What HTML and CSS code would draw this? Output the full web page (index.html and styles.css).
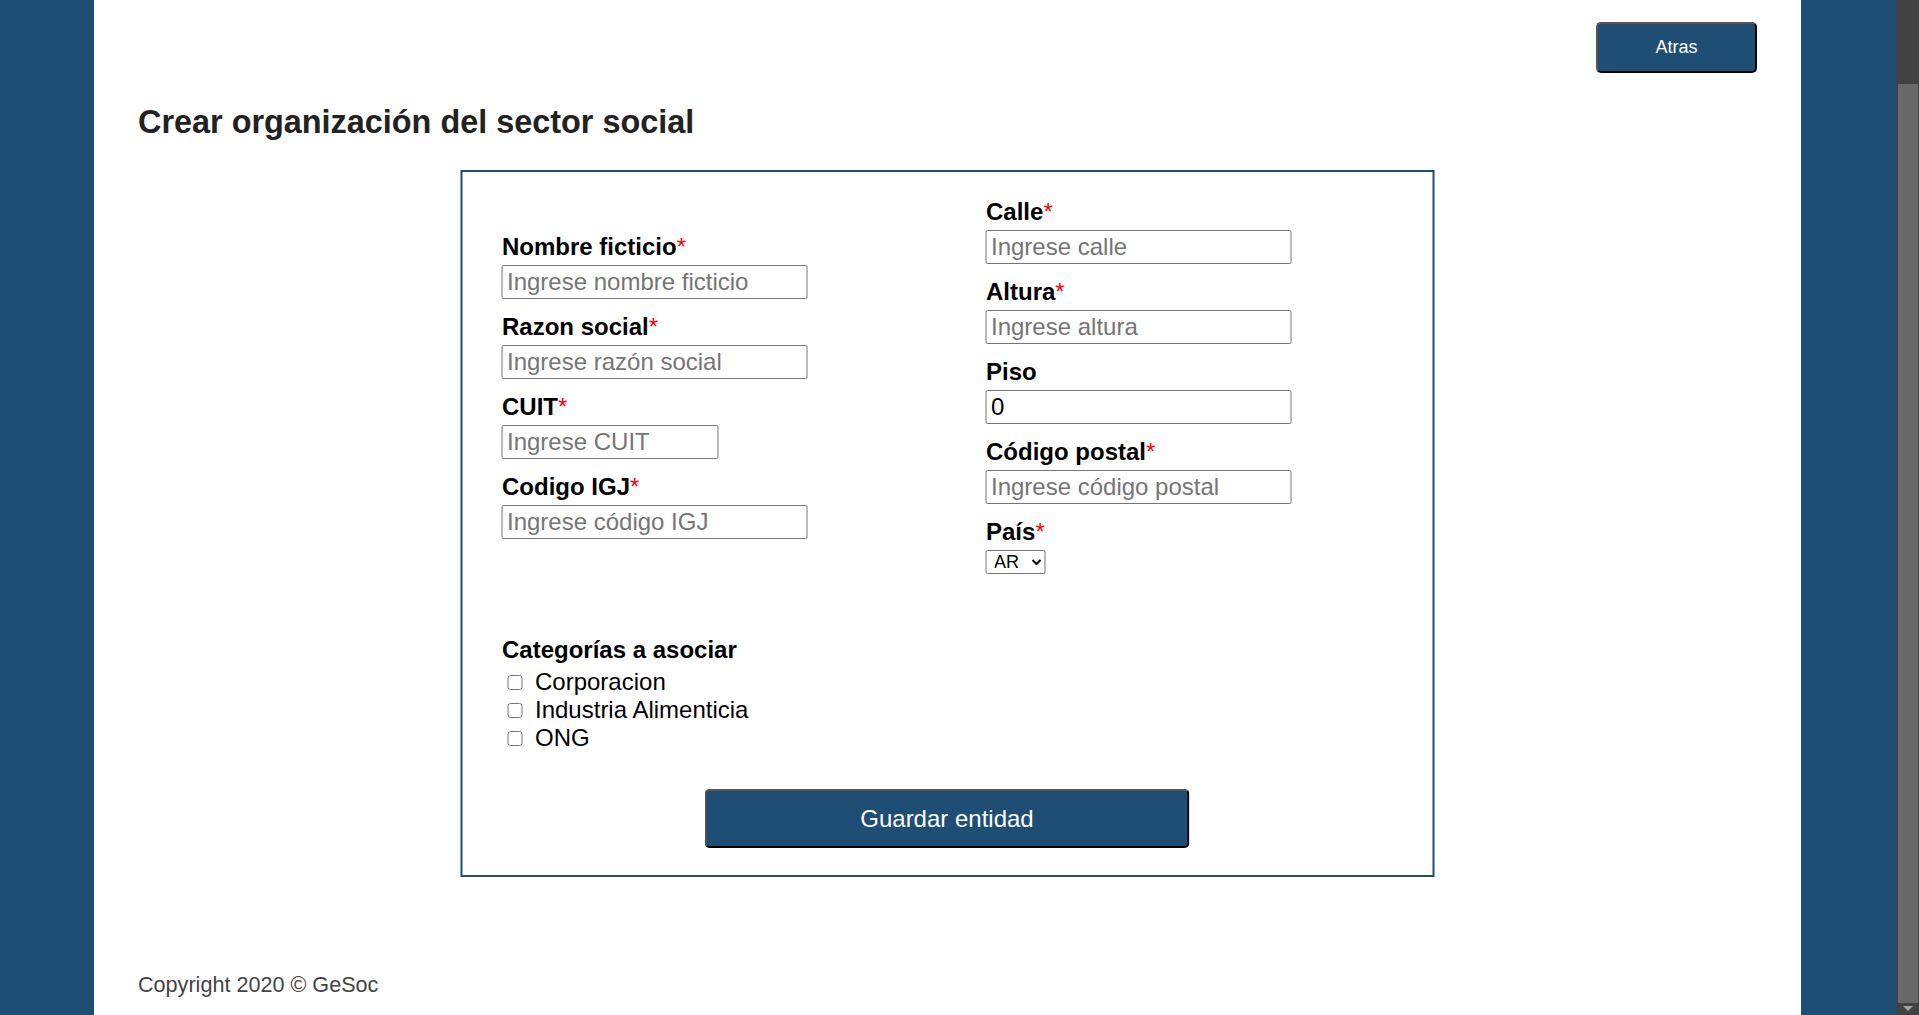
FILE: index.html
```html
<!DOCTYPE html>
<html lang="es">
<head>
<meta charset="utf-8">
<title>Crear organización del sector social</title>
<link rel="stylesheet" href="styles.css">
</head>
<body>
<div class="page">
  <aside class="side side-left"></aside>
  <main class="main">
    <div class="topbar"><button class="btn btn-back" type="button">Atras</button></div>
    <h1 class="title">Crear organización del sector social</h1>
    <form class="card">
      <div class="cols">
        <div class="col col-left">
          <div class="field"><label class="lbl">Nombre ficticio<span class="req">*</span></label><input class="inp" type="text" placeholder="Ingrese nombre ficticio"></div>
          <div class="field"><label class="lbl">Razon social<span class="req">*</span></label><input class="inp" type="text" placeholder="Ingrese razón social"></div>
          <div class="field"><label class="lbl">CUIT<span class="req">*</span></label><input class="inp inp-short" type="text" placeholder="Ingrese CUIT"></div>
          <div class="field"><label class="lbl">Codigo IGJ<span class="req">*</span></label><input class="inp" type="text" placeholder="Ingrese código IGJ"></div>
        </div>
        <div class="col col-right">
          <div class="field"><label class="lbl">Calle<span class="req">*</span></label><input class="inp" type="text" placeholder="Ingrese calle"></div>
          <div class="field"><label class="lbl">Altura<span class="req">*</span></label><input class="inp" type="text" placeholder="Ingrese altura"></div>
          <div class="field"><label class="lbl">Piso</label><input class="inp" type="text" value="0"></div>
          <div class="field"><label class="lbl">Código postal<span class="req">*</span></label><input class="inp" type="text" placeholder="Ingrese código postal"></div>
          <div class="field"><label class="lbl">País<span class="req">*</span></label><select class="sel"><option>AR</option></select></div>
        </div>
      </div>
      <div class="cats">
        <div class="lbl">Categorías a asociar</div>
        <label class="chk"><input class="box" type="checkbox"><span>Corporacion</span></label>
        <label class="chk"><input class="box" type="checkbox"><span>Industria Alimenticia</span></label>
        <label class="chk"><input class="box" type="checkbox"><span>ONG</span></label>
      </div>
      <div class="actions"><button class="btn btn-save" type="button">Guardar entidad</button></div>
    </form>
    <footer class="footer">Copyright 2020 © GeSoc</footer>
  </main>
  <aside class="side side-right"></aside>
  <div class="scrollbar">
    <div class="sb-top"></div>
    <div class="sb-thumb"></div>
    <div class="sb-arrow"><svg width="10" height="6" viewBox="0 0 10 6"><path d="M0 0 L10 0 L5 5 Z" fill="#a3a3a3"/></svg></div>
  </div>
</div>
</body>
</html>
```
FILE: styles.css
```css
* { box-sizing: border-box; }
html, body { margin: 0; padding: 0; height: 100%; overflow: hidden; }
body { font-family: "Liberation Sans", Arial, sans-serif; color: #000; background: #fff; }

.page { display: flex; height: 1015px; }
.side { background: #1f4e74; flex: none; }
.side-left { width: 94px; }
.side-right { width: 95px; }
.main { flex: 1; background: #fff; display: flex; flex-direction: column; }

.topbar { display: flex; justify-content: flex-end; padding: 22px 44px 0 0; }
.btn {
  background: #1f4e74; color: #fff; font-family: "Liberation Sans", Arial, sans-serif;
  border-style: solid; border-width: 2px; border-color: #555 #000 #000 #555;
  border-radius: 5px; cursor: pointer;
}
.btn-back { width: 161px; height: 51px; font-size: 18px; }

.title { margin: 31px 0 0 44px; font-size: 32.4px; line-height: 37px; font-weight: bold; color: #222; }

.card {
  width: 974px; margin: 29px auto 0; border: 2px solid #1f4e74;
  padding: 26px 0 27px; transform: translateX(-0.5px);
}
.cols { display: flex; align-items: center; }
.col { width: 50%; display: flex; flex-direction: column; }
.col-left { padding-left: 40px; }
.col-right { padding-left: 39px; }
.field { display: flex; flex-direction: column; align-items: flex-start; }
.field + .field { margin-top: 14px; }
.lbl { display: block; font-size: 24px; line-height: 28px; font-weight: bold; margin-bottom: 4px; }
.req { color: #f00; font-weight: normal; }
.inp {
  width: 306px; height: 34px; font-size: 24px; font-family: "Liberation Sans", Arial, sans-serif;
  border: 1px solid #767676; border-radius: 2px; padding: 0 5px; color: #000; margin: 0 0 0 -1px;
}
.inp::placeholder { color: #757575; }
.inp-short { width: 217px; }
.sel {
  width: 60px; height: 24px; font-size: 18px; font-family: "Liberation Sans", Arial, sans-serif;
  border: 1px solid #767676; border-radius: 2px; padding: 0 0 0 4px; margin: 0 0 0 -1px; background: #fff; color: #000;
}

.cats { margin-top: 62px; padding-left: 40px; }
.chk { display: flex; align-items: center; height: 28px; font-size: 24px; }
.box {
  appearance: none; -webkit-appearance: none;
  width: 15px; height: 15px; margin: 0 13px 0 5px;
  border: 1px solid #767676; border-radius: 3px; background: #fff;
}

.actions { display: flex; justify-content: center; margin-top: 37px; }
.btn-save { width: 485px; height: 59px; font-size: 24px; }

.footer { margin: 95px 0 0 44px; font-size: 21.6px; line-height: 25px; color: #444; }

.scrollbar { width: 23px; flex: none; background: #424242; display: flex; flex-direction: column; padding: 0 1px 0 2px; }
.sb-top { height: 84px; flex: none; }
.sb-thumb { flex: 1; background: #686868; }
.sb-arrow { height: 12px; flex: none; display: flex; align-items: center; justify-content: center; }
```
